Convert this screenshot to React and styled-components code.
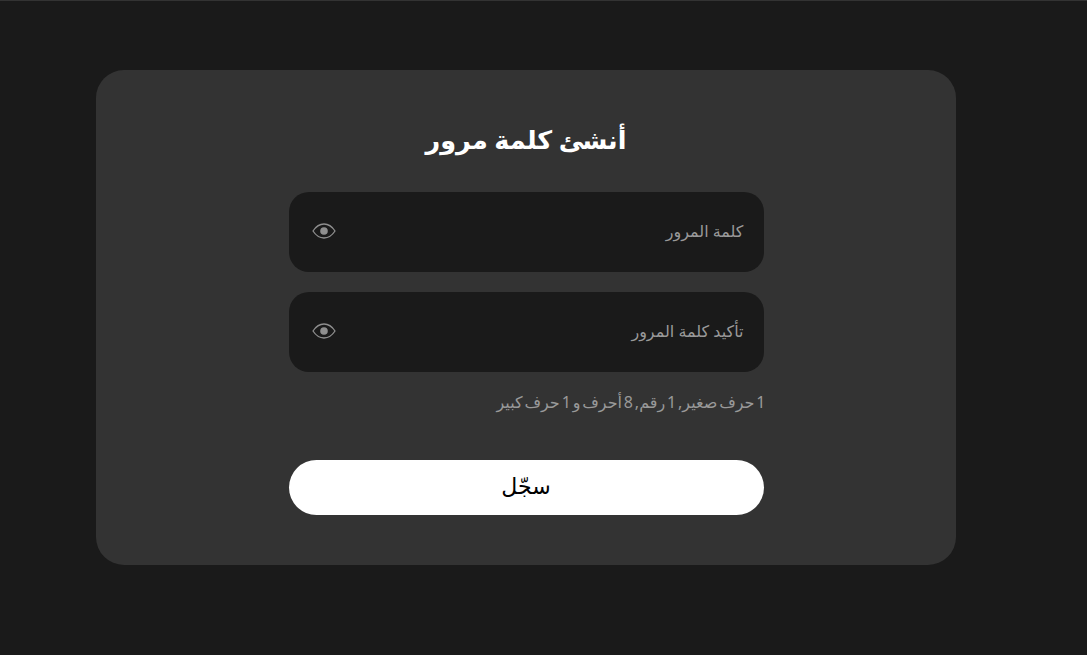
import React from 'react';
import styled, { createGlobalStyle } from 'styled-components';

const GlobalStyle = createGlobalStyle`
  html, body {
    margin: 0;
    background: #1a1a1a;
    font-family: "Noto Sans", "DejaVu Sans", "Liberation Sans", sans-serif;
  }
`;

const Page = styled.div`
  box-sizing: border-box;
  min-height: 655px;
  padding: 69px 0 0 96px;
  background: #1a1a1a;
  border-top: 1px solid #333333;
`;

const Card = styled.main`
  box-sizing: border-box;
  width: 860px;
  height: 495px;
  padding-top: 49px;
  background: #333333;
  border-radius: 28px;
  display: flex;
  flex-direction: column;
  align-items: center;
`;

const Title = styled.h1`
  margin: 0 0 33px;
  height: 40px;
  line-height: 40px;
  font-size: 25.5px;
  font-weight: 700;
  color: #ffffff;
  text-align: center;
`;

const Form = styled.form`
  width: 475px;
  display: flex;
  flex-direction: column;
  gap: 20px;
`;

const Field = styled.label`
  box-sizing: border-box;
  height: 80px;
  padding: 0 20px 2px 23px;
  background: #1a1a1a;
  border-radius: 20px;
  display: flex;
  align-items: center;
  justify-content: space-between;
`;

const Placeholder = styled.span`
  font-size: 16px;
  letter-spacing: -0.5px;
  color: #999999;
`;

const Hint = styled.p`
  margin: 0 -2px 28px 0;
  height: 20px;
  line-height: 20px;
  font-size: 16px;
  letter-spacing: -0.5px;
  word-spacing: -2.3px;
  color: #999999;
`;

const Submit = styled.button`
  height: 55px;
  padding: 0 0 5px;
  border: 0;
  border-radius: 28px;
  background: #ffffff;
  color: #000000;
  font: inherit;
  font-size: 22px;
`;

const EyeIcon = () => (
  <svg width="24" height="16" viewBox="0 0 24 16" fill="none">
    <path d="M1 8C4 3.4 7.6 1 12 1s8 2.4 11 7c-3 4.600-6.600 7-11 7S4 12.600 1 8Z" stroke="#8f8f8f" strokeWidth="1.300" />
    <circle cx="12" cy="8" r="3.800" fill="#8f8f8f" />
  </svg>
);

const PasswordField = ({ label }) => (
  <Field>
    <EyeIcon />
    <Placeholder dir="rtl">{label}</Placeholder>
  </Field>
);

const App = () => (
  <>
    <GlobalStyle />
    <Page>
      <Card>
        <Title dir="rtl">أنشئ كلمة مرور</Title>
        <Form onSubmit={(e) => e.preventDefault()}>
          <PasswordField label="كلمة المرور" />
          <PasswordField label="تأكيد كلمة المرور" />
          <Hint dir="rtl">1 حرف صغير, 1 رقم, 8 أحرف و 1 حرف كبير</Hint>
          <Submit type="submit">سجّل</Submit>
        </Form>
      </Card>
    </Page>
  </>
);

export default App;
